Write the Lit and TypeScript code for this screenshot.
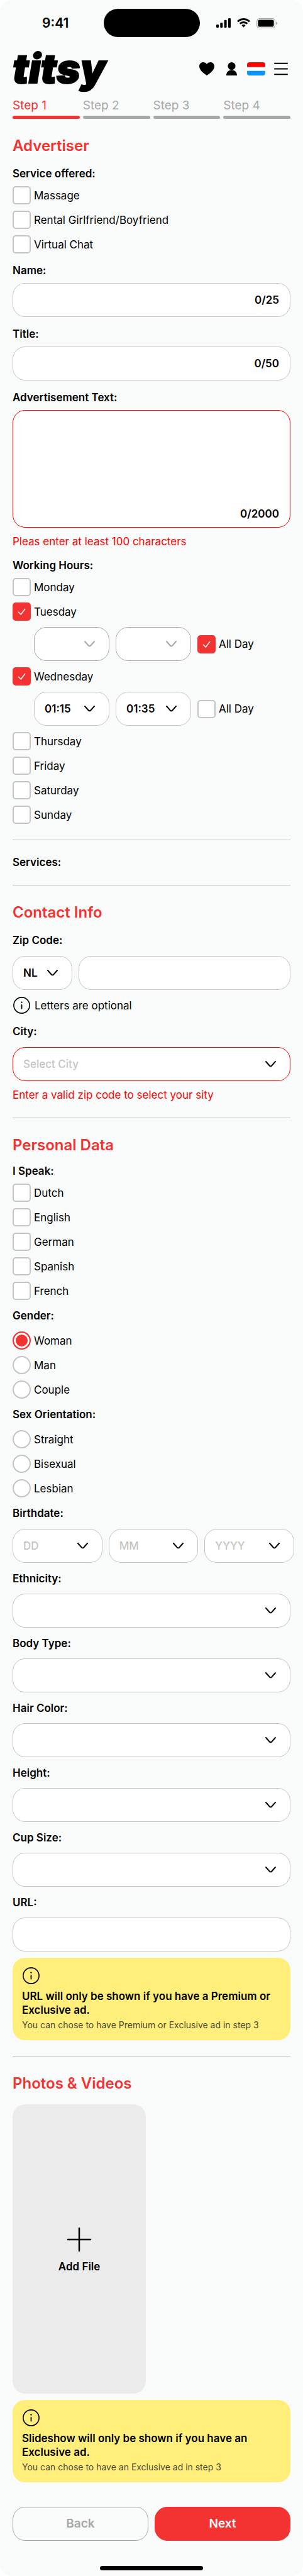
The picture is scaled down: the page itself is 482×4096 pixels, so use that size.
import { LitElement, html, css, nothing } from "lit";
import { customElement, property, state } from "lit/decorators.js";
import { classMap } from "lit/directives/class-map.js";

const base = css`
  *,
  *::before,
  *::after {
    box-sizing: border-box;
  }
  button,
  input,
  select,
  textarea {
    font: inherit;
    color: inherit;
    margin: 0;
  }
  svg {
    display: block;
    flex: none;
  }
`;

const infoIcon = html`<svg width="29" height="29" viewBox="0 0 29 29" fill="none" aria-hidden="true">
  <circle cx="14.5" cy="14.5" r="12.6" stroke="#000" stroke-width="1.6" />
  <path d="M14.5 13.8V19.6" stroke="#000" stroke-width="1.8" stroke-linecap="round" />
  <circle cx="14.5" cy="9.6" r="1.2" fill="#000" />
</svg>`;

@customElement("status-bar")
export class StatusBar extends LitElement {
  static styles = [
    base,
    css`
      .bar {
        display: grid;
        grid-template-columns: 1fr 153px 1fr;
        align-items: center;
        padding-top: 14px;
      }
      .time {
        padding-left: 12px;
        text-align: center;
        font-size: 21px;
        font-weight: 600;
        line-height: 24px;
      }
      .island {
        height: 45px;
        border-radius: 23px;
        background: #000;
      }
      .signals {
        display: flex;
        justify-content: center;
        align-items: center;
        gap: 10px;
        padding-right: 14px;
      }
    `,
  ];

  render() {
    return html`<div class="bar">
      <div class="time">9:41</div>
      <div class="island"></div>
      <div class="signals">
        <svg width="23" height="15" viewBox="0 0 23 15" aria-label="Signal">
          <rect x="0" y="10" width="4" height="5" rx="1.2" />
          <rect x="6.3" y="7" width="4" height="8" rx="1.2" />
          <rect x="12.6" y="2.8" width="4" height="12.2" rx="1.2" />
          <rect x="19" y="0" width="4" height="15" rx="1.2" />
        </svg>
        <svg width="21" height="15" viewBox="0 0 21 15" aria-label="Wi-Fi">
          <path d="M10.5 0C6.5 0 2.8 1.5 0 4.2L2 6.3C4.3 4.1 7.3 2.9 10.5 2.9S16.7 4.1 19 6.3L21 4.2C18.2 1.5 14.5 0 10.5 0Z" />
          <path d="M10.5 5C7.9 5 5.5 6 3.7 7.7L5.7 9.8C7 8.6 8.7 7.9 10.5 7.9S14 8.6 15.3 9.8L17.3 7.7C15.5 6 13.1 5 10.5 5Z" />
          <path d="M10.5 9.9C9.3 9.9 8.2 10.4 7.4 11.2L10.5 14.5L13.6 11.2C12.8 10.4 11.7 9.9 10.5 9.9Z" />
        </svg>
        <svg width="33" height="16" viewBox="0 0 33 16" aria-label="Battery">
          <rect x="0.6" y="0.6" width="28.8" height="14.8" rx="4.5" fill="none" stroke="#a8a8a8" stroke-width="1.2" />
          <rect x="2.4" y="2.4" width="25.2" height="11.2" rx="2.8" />
          <path d="M31 5.5V10.5C32.2 10 33 9.1 33 8S32.2 6 31 5.5Z" fill="#a8a8a8" />
        </svg>
      </div>
    </div>`;
  }
}

@customElement("site-header")
export class SiteHeader extends LitElement {
  static styles = [
    base,
    css`
      .header {
        display: flex;
        justify-content: space-between;
        align-items: center;
        height: 74px;
        margin-top: 13px;
        padding: 0 24px 0 20px;
      }
      .logo {
        color: #000;
        text-decoration: none;
        font-size: 64px;
        font-weight: 900;
        font-style: italic;
        line-height: 64px;
        -webkit-text-stroke: 2px #000;
      }
      .actions {
        display: flex;
        align-items: center;
      }
      .action {
        display: block;
        padding: 0 7px;
        border: 0;
        background: none;
      }
      .action:last-child {
        padding-right: 0;
      }
      .heart {
        padding-right: 12px;
      }
      .person {
        padding-right: 9px;
      }
    `,
  ];

  render() {
    return html`<header class="header">
      <a class="logo" href="#home">titsy</a>
      <div class="actions">
        <button class="action heart" type="button" aria-label="Favourites">
          <svg width="24" height="21" viewBox="0 0 24 21">
            <path d="M12 21C7.5 17.8 0 12.6 0 6.4C0 2.5 2.9 0 6.2 0C8.7 0 10.9 1.2 12 3.1C13.1 1.2 15.3 0 17.8 0C21.1 0 24 2.5 24 6.4C24 12.6 16.5 17.8 12 21Z" />
          </svg>
        </button>
        <button class="action person" type="button" aria-label="Account">
          <svg width="17" height="21" viewBox="0 0 17 21">
            <circle cx="8.5" cy="6.1" r="6.1" />
            <path d="M0 21C0 16 3.3 12.2 8.5 12.2S17 16 17 21Z" />
          </svg>
        </button>
        <button class="action" type="button" aria-label="Language">
          <svg width="29" height="21" viewBox="0 0 29 21">
            <clipPath id="flag"><rect width="29" height="21" rx="4" /></clipPath>
            <g clip-path="url(#flag)">
              <rect width="29" height="21" fill="#fff" />
              <rect width="29" height="7.5" fill="#f00" />
              <rect y="13.7" width="29" height="7.3" fill="#0b93ff" />
            </g>
          </svg>
        </button>
        <button class="action" type="button" aria-label="Menu">
          <svg width="22" height="21" viewBox="0 0 22 21">
            <path d="M1 1.8H21M1 10.5H21M1 19.2H21" stroke="#000" stroke-width="2" stroke-linecap="round" />
          </svg>
        </button>
      </div>
    </header>`;
  }
}

@customElement("step-nav")
export class StepNav extends LitElement {
  @property({ type: Number }) current = 1;

  static styles = [
    base,
    css`
      .steps {
        display: flex;
        gap: 5px;
        padding: 10px 20px 0;
      }
      .step {
        flex: 1;
        color: #a7a7a7;
        text-decoration: none;
        font-size: 19px;
        line-height: 24px;
      }
      .step::after {
        content: "";
        display: block;
        height: 5px;
        margin-top: 4px;
        border-radius: 3px;
        background: currentColor;
      }
      .active {
        color: #f33232;
      }
    `,
  ];

  render() {
    return html`<nav class="steps">
      ${[1, 2, 3, 4].map(
        (n) => html`<a href="#step-${n}" class=${classMap({ step: true, active: n === this.current })}>Step ${n}</a>`
      )}
    </nav>`;
  }
}

@customElement("choice-box")
export class ChoiceBox extends LitElement {
  @property() label = "";
  @property() name = "";
  @property() type: "checkbox" | "radio" = "checkbox";
  @property({ type: Boolean }) checked = false;

  static styles = [
    base,
    css`
      :host {
        display: block;
      }
      .choice {
        display: flex;
        align-items: center;
        gap: 5px;
        width: fit-content;
        line-height: 22px;
      }
      .mark {
        display: grid;
        place-items: center;
      }
      .mark > * {
        grid-area: 1 / 1;
      }
      .control {
        appearance: none;
        width: 29px;
        height: 29px;
        border: 2px solid #c4c4c4;
        border-radius: 5px;
        background: #fff;
      }
      .control:checked {
        border-color: #f33232;
        background: #f33232;
      }
      .round {
        border-radius: 50%;
      }
      .round:checked {
        box-shadow: inset 0 0 0 3px #fff;
      }
      .tick {
        pointer-events: none;
      }
    `,
  ];

  private toggle(e: Event) {
    this.checked = (e.target as HTMLInputElement).checked;
    this.dispatchEvent(new CustomEvent("choose", { bubbles: true, composed: true }));
  }

  render() {
    const radio = this.type === "radio";
    return html`<label class="choice">
      <span class="mark">
        <input
          class=${classMap({ control: true, round: radio })}
          type=${this.type}
          name=${this.name}
          .checked=${this.checked}
          @change=${this.toggle}
        />
        ${this.checked && !radio
          ? html`<svg class="tick" width="13" height="11" viewBox="0 0 13 11" fill="none" aria-hidden="true">
              <path d="M1 5.8L5.2 10L12 1" stroke="#fff" stroke-width="1.5" />
            </svg>`
          : nothing}
      </span>
      <span>${this.label}</span>
    </label>`;
  }
}

@customElement("choice-list")
export class ChoiceList extends LitElement {
  @property() heading = "";
  @property() type: "checkbox" | "radio" = "checkbox";
  @property({ type: Array }) items: string[] = [];
  @property() selected = "";

  static styles = [
    base,
    css`
      :host {
        display: block;
      }
      .group {
        margin: 0;
        padding: 0;
        border: 0;
        min-width: 0;
      }
      .legend {
        padding: 0;
        margin-bottom: 9px;
        font-weight: 600;
        line-height: 22px;
      }
      .spaced {
        margin-bottom: 14px;
      }
      .items {
        display: grid;
        gap: 10px;
      }
    `,
  ];

  render() {
    return html`<fieldset class="group">
      <legend class=${classMap({ legend: true, spaced: this.type === "radio" })}>${this.heading}</legend>
      <div class="items">
        ${this.items.map(
          (item) => html`<choice-box
            .label=${item}
            .name=${this.heading}
            .type=${this.type}
            .checked=${item === this.selected}
            @choose=${() => {
              if (this.type === "radio") this.selected = item;
            }}
          ></choice-box>`
        )}
      </div>
    </fieldset>`;
  }
}

@customElement("drop-down")
export class DropDown extends LitElement {
  @property() name = "";
  @property() value = "";
  @property() placeholder = "";
  @property({ type: Boolean }) disabled = false;
  @property({ type: Boolean }) invalid = false;

  static styles = [
    base,
    css`
      :host {
        display: block;
      }
      .wrap {
        display: grid;
        align-items: center;
      }
      .wrap > * {
        grid-area: 1 / 1;
      }
      .select {
        appearance: none;
        width: 100%;
        height: 54px;
        padding: 0 44px 0 16px;
        border: 1px solid #c4c4c4;
        border-radius: 20px;
        background: #fff;
        font-weight: 600;
        opacity: 1;
      }
      .empty {
        color: #c4c4c4;
        font-weight: 500;
      }
      .select:disabled {
        border-color: #a7a7a7;
      }
      .invalid {
        border-color: #f00;
      }
      .chevron {
        justify-self: end;
        margin-right: 23px;
        pointer-events: none;
      }
    `,
  ];

  render() {
    const classes = { select: true, empty: !this.value, invalid: this.invalid };
    return html`<div class="wrap">
      <select class=${classMap(classes)} aria-label=${this.name} ?disabled=${this.disabled}>
        <option>${this.value || this.placeholder}</option>
      </select>
      <svg class="chevron" width="17" height="10" viewBox="0 0 17 10" fill="none" aria-hidden="true">
        <path
          d="M1 1L6.8 7.5Q8.5 9.3 10.2 7.5L16 1"
          stroke=${this.disabled ? "#a7a7a7" : "#000"}
          stroke-width="1.9"
          stroke-linecap="round"
        />
      </svg>
    </div>`;
  }
}

@customElement("text-box")
export class TextBox extends LitElement {
  @property() name = "";
  @property({ type: Number }) limit = 0;
  @property({ type: Boolean }) multiline = false;
  @property({ type: Boolean }) invalid = false;
  @state() private length = 0;

  static styles = [
    base,
    css`
      :host {
        display: block;
      }
      .wrap {
        display: grid;
        align-items: center;
      }
      .wrap > * {
        grid-area: 1 / 1;
      }
      .input {
        display: block;
        width: 100%;
        height: 54px;
        padding: 0 84px 0 17px;
        border: 1px solid #c4c4c4;
        border-radius: 20px;
        background: #fff;
        outline: none;
      }
      .area {
        height: 187px;
        padding: 15px 17px 36px;
        resize: none;
      }
      .invalid {
        border-color: #f00;
      }
      .count {
        justify-self: end;
        margin-right: 18px;
        font-weight: 600;
        line-height: 22px;
        pointer-events: none;
      }
      .low {
        align-self: end;
        margin-bottom: 11px;
      }
    `,
  ];

  private count(e: Event) {
    this.length = (e.target as HTMLInputElement).value.length;
  }

  render() {
    const classes = classMap({ input: true, area: this.multiline, invalid: this.invalid });
    return html`<div class="wrap">
      ${this.multiline
        ? html`<textarea class=${classes} aria-label=${this.name} @input=${this.count}></textarea>`
        : html`<input class=${classes} type="text" aria-label=${this.name} @input=${this.count} />`}
      ${this.limit
        ? html`<output class=${classMap({ count: true, low: this.multiline })}>${this.length}/${this.limit}</output>`
        : nothing}
    </div>`;
  }
}

@customElement("notice-card")
export class NoticeCard extends LitElement {
  @property() heading = "";
  @property() note = "";

  static styles = [
    base,
    css`
      :host {
        display: block;
        margin-top: 10px;
      }
      .card {
        padding: 14px 15px;
        border-radius: 20px;
        background: #ffef7a;
      }
      .title {
        margin: 7px 0 3px;
        font-weight: 600;
        line-height: 22px;
      }
      .note {
        margin: 0;
        color: #4c4937;
        font-size: 14px;
        line-height: 20px;
      }
    `,
  ];

  render() {
    return html`<aside class="card">
      ${infoIcon}
      <p class="title">${this.heading}</p>
      <p class="note">${this.note}</p>
    </aside>`;
  }
}

type Day = { name: string; hours?: { from: string; to: string; allDay: boolean } };

const week: Day[] = [
  { name: "Monday" },
  { name: "Tuesday", hours: { from: "", to: "", allDay: true } },
  { name: "Wednesday", hours: { from: "01:15", to: "01:35", allDay: false } },
  { name: "Thursday" },
  { name: "Friday" },
  { name: "Saturday" },
  { name: "Sunday" },
];

@customElement("app-root")
export class AppRoot extends LitElement {
  static styles = [
    base,
    css`
      :host {
        display: block;
        background: #fff;
        color: #000;
        font-family: Inter, "Open Sans", sans-serif;
        font-size: 17px;
        line-height: 22px;
      }
      .page {
        overflow: hidden;
        border-radius: 18px;
        background: #f9fbfa;
      }
      .form {
        padding: 0 20px;
      }
      .section {
        padding: 27px 0 25px;
        border-bottom: 1px solid #c4c4c4;
      }
      .plain {
        padding-top: 24px;
      }
      .last {
        padding-bottom: 0;
        border-bottom: 0;
      }
      .heading {
        margin: 0 0 17px;
        color: #f33232;
        font-size: 24px;
        font-weight: 600;
        line-height: 32px;
      }
      .close {
        margin-bottom: 14px;
      }
      .label {
        margin: 0;
        font-size: 17px;
        font-weight: 600;
        line-height: 22px;
      }
      .stack {
        display: grid;
        gap: 16px;
      }
      .personal {
        gap: 14px;
      }
      .field {
        display: grid;
        gap: 9px;
      }
      .roomy {
        gap: 14px;
      }
      .tight {
        gap: 13px;
      }
      .days {
        display: grid;
        gap: 10px;
      }
      .hours {
        display: flex;
        align-items: center;
        gap: 10px;
        padding-left: 34px;
      }
      .time {
        width: 120px;
      }
      .error {
        margin: 2px 0 0;
        color: #f00;
      }
      .zip {
        display: flex;
        gap: 10px;
      }
      .country {
        width: 95px;
      }
      .grow {
        flex: 1;
      }
      .hint {
        display: flex;
        align-items: center;
        gap: 6px;
        margin: -4px 0 0;
      }
      .below {
        margin: -3px 0 0;
      }
      .birth {
        display: flex;
        gap: 10px;
        margin-right: -6px;
      }
      .upload {
        display: flex;
        flex-direction: column;
        align-items: center;
        justify-content: center;
        gap: 8px;
        width: 48%;
        height: 460px;
        padding: 0;
        border: 0;
        border-radius: 20px;
        background: #ebebeb;
        font-weight: 600;
      }
      .buttons {
        display: flex;
        gap: 10px;
        padding-top: 39px;
      }
      .button {
        flex: 1;
        height: 54px;
        border: 1px solid #f33232;
        border-radius: 20px;
        background: #f33232;
        color: #fff;
        font-size: 19px;
        font-weight: 600;
      }
      .ghost {
        border-color: #a7a7a7;
        background: transparent;
        color: #a7a7a7;
      }
      .home {
        width: 164px;
        height: 7px;
        margin: 40px auto 9px;
        border-radius: 4px;
        background: #000;
      }
    `,
  ];

  private field(label: string, control: unknown, spacing = "") {
    return html`<div class="field ${spacing}">
      <p class="label">${label}</p>
      ${control}
    </div>`;
  }

  private day(day: Day) {
    return html`<choice-box .label=${day.name} ?checked=${!!day.hours}></choice-box>
      ${day.hours
        ? html`<div class="hours">
            <drop-down class="time" name="${day.name} from" .value=${day.hours.from} ?disabled=${day.hours.allDay}></drop-down>
            <drop-down class="time" name="${day.name} to" .value=${day.hours.to} ?disabled=${day.hours.allDay}></drop-down>
            <choice-box label="All Day" ?checked=${day.hours.allDay}></choice-box>
          </div>`
        : nothing}`;
  }

  render() {
    return html`<main class="page">
      <status-bar></status-bar>
      <site-header></site-header>
      <step-nav .current=${1}></step-nav>
      <form class="form" @submit=${(e: Event) => e.preventDefault()}>
        <section class="section">
          <h2 class="heading">Advertiser</h2>
          <div class="stack">
            <choice-list
              heading="Service offered:"
              .items=${["Massage", "Rental Girlfriend/Boyfriend", "Virtual Chat"]}
            ></choice-list>
            ${this.field("Name:", html`<text-box name="Name" .limit=${25}></text-box>`)}
            ${this.field("Title:", html`<text-box name="Title" .limit=${50}></text-box>`)}
            ${this.field(
              "Advertisement Text:",
              html`<text-box name="Advertisement Text" multiline invalid .limit=${2000}></text-box>
                <p class="error">Pleas enter at least 100 characters</p>`
            )}
            ${this.field("Working Hours:", html`<div class="days">${week.map((d) => this.day(d))}</div>`)}
          </div>
        </section>

        <section class="section plain">
          <h3 class="label">Services:</h3>
        </section>

        <section class="section">
          <h2 class="heading">Contact Info</h2>
          <div class="stack">
            ${this.field(
              "Zip Code:",
              html`<div class="zip">
                  <drop-down class="country" name="Country" value="NL"></drop-down>
                  <text-box class="grow" name="Zip Code"></text-box>
                </div>
                <p class="hint">${infoIcon}<span>Letters are optional</span></p>`,
              "roomy"
            )}
            ${this.field(
              "City:",
              html`<drop-down name="City" placeholder="Select City" invalid></drop-down>
                <p class="error below">Enter a valid zip code to select your sity</p>`,
              "roomy"
            )}
          </div>
        </section>

        <section class="section">
          <h2 class="heading close">Personal Data</h2>
          <div class="stack personal">
            <choice-list
              heading="I Speak:"
              .items=${["Dutch", "English", "German", "Spanish", "French"]}
            ></choice-list>
            <choice-list
              heading="Gender:"
              type="radio"
              selected="Woman"
              .items=${["Woman", "Man", "Couple"]}
            ></choice-list>
            <choice-list
              heading="Sex Orientation:"
              type="radio"
              .items=${["Straight", "Bisexual", "Lesbian"]}
            ></choice-list>
            ${this.field(
              "Birthdate:",
              html`<div class="birth">
                ${["DD", "MM", "YYYY"].map(
                  (p) => html`<drop-down class="grow" name="Birthdate ${p}" .placeholder=${p}></drop-down>`
                )}
              </div>`,
              "roomy"
            )}
            ${["Ethnicity", "Body Type", "Hair Color", "Height", "Cup Size"].map((name) =>
              this.field(`${name}:`, html`<drop-down .name=${name}></drop-down>`, "tight")
            )}
            ${this.field("URL:", html`<text-box name="URL"></text-box>`, "tight")}
          </div>
          <notice-card
            heading="URL will only be shown if you have a Premium or Exclusive ad."
            note="You can chose to have Premium or Exclusive ad in step 3"
          ></notice-card>
        </section>

        <section class="section last">
          <h2 class="heading">Photos &amp; Videos</h2>
          <button class="upload" type="button">
            <svg width="48" height="48" viewBox="0 0 48 48" aria-hidden="true">
              <path d="M24 6V42M6 24H42" stroke="#000" stroke-width="2.5" stroke-linecap="round" />
            </svg>
            Add File
          </button>
          <notice-card
            heading="Slideshow will only be shown if you have an Exclusive ad."
            note="You can chose to have an Exclusive ad in step 3"
          ></notice-card>
          <div class="buttons">
            <button class="button ghost" type="button">Back</button>
            <button class="button" type="submit">Next</button>
          </div>
        </section>
      </form>
      <div class="home"></div>
    </main>`;
  }
}
